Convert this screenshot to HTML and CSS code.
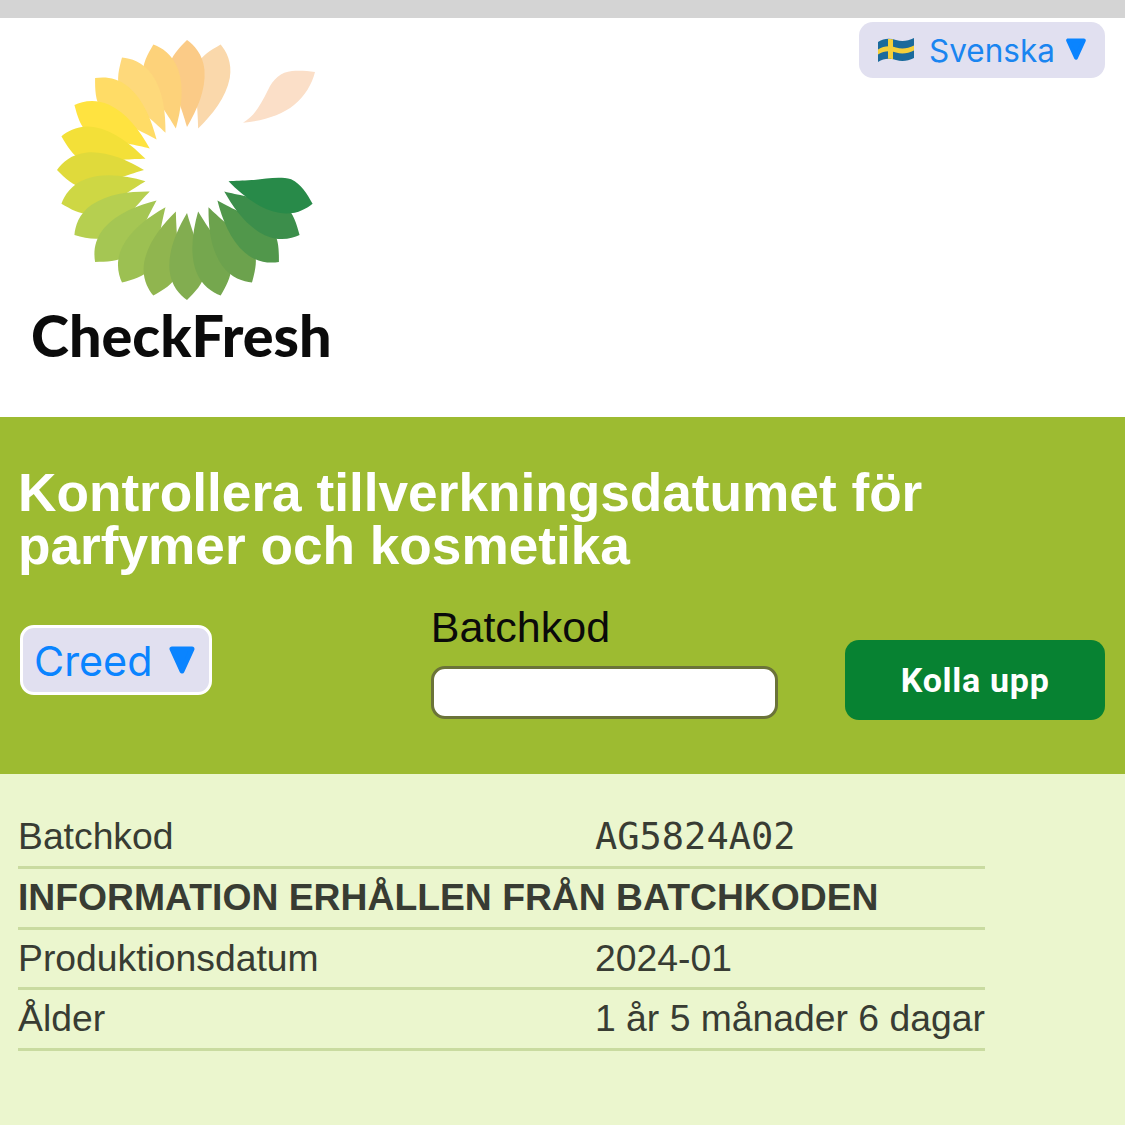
FILE: index.html
```html
<!DOCTYPE html>
<html>
<head>
    <meta charset="utf-8">
    <title>CheckFresh</title>
    <link rel="stylesheet" href="styles.css">
</head>
<body>
    <div class="topbar"></div>

    <!-- Logo och språk -->
    <header class="header">
        <div class="logo">
            <svg class="logo-mark" width="300" height="280" viewBox="0 0 300 280">
                <defs>
                    <path id="petal" d="M0,-43 C-2,-50 -4,-56 -7,-65 C-11,-77 -18,-90 -18,-103 C-16,-114 -8,-122 0,-130 C7,-125 16,-116 17.5,-100 C19,-80 10,-60 0,-43 Z"/>
                </defs>
                <g transform="translate(157 150)">
                    <use href="#petal" transform="rotate(15)" fill="#fad8ab"/>
                    <use href="#petal" transform="rotate(0)" fill="#fbcb87"/>
                    <use href="#petal" transform="rotate(-15)" fill="#fdd27a"/>
                    <use href="#petal" transform="rotate(-30)" fill="#fed97b"/>
                    <use href="#petal" transform="rotate(-45)" fill="#ffdc66"/>
                    <use href="#petal" transform="rotate(-60)" fill="#ffe340"/>
                    <use href="#petal" transform="rotate(-75)" fill="#f3e038"/>
                    <use href="#petal" transform="rotate(-90)" fill="#e0da3b"/>
                    <use href="#petal" transform="rotate(-105)" fill="#ced744"/>
                    <use href="#petal" transform="rotate(-120)" fill="#b6cf50"/>
                    <use href="#petal" transform="rotate(-135)" fill="#a5c653"/>
                    <use href="#petal" transform="rotate(-150)" fill="#9cc052"/>
                    <use href="#petal" transform="rotate(-165)" fill="#90b54f"/>
                    <use href="#petal" transform="rotate(180)" fill="#82ad50"/>
                    <use href="#petal" transform="rotate(165)" fill="#75a74e"/>
                    <use href="#petal" transform="rotate(150)" fill="#6ca24d"/>
                    <use href="#petal" transform="rotate(135)" fill="#51974b"/>
                    <use href="#petal" transform="rotate(120)" fill="#3c8e4b"/>
                    <use href="#petal" transform="rotate(105)" fill="#288a49"/>
                </g>
                <path d="M213,102.7 C224,97 231,84 238,70 C243,59 251,52 262,51 C270,50.5 278,51 285,52 C282,64 275,76 264,85 C252,95 233,101 213,102.7 Z" fill="#fbdfc8"/>
            </svg>
            <div class="logo-text">CheckFresh</div>
        </div>
        <button class="lang-button">
            <svg class="flag" width="36" height="26" viewBox="0 0 36 26">
                <path d="M0,5 C6,1 12,1 18,3 C24,5 30,4 36,1 V21 C30,24 24,25 18,23 C12,21 6,21 0,25 Z" fill="#1a6a9c"/>
                <path d="M10,2 C12,2 13,2 15,2.3 V22.3 C13,22 12,22 10,21.8 Z" fill="#f4cf3a"/>
                <path d="M0,12.5 C6,8.5 12,8.5 18,10.5 C24,12.5 30,11.5 36,8.5 V13.5 C30,16.5 24,17.5 18,15.5 C12,13.5 6,13.5 0,17.5 Z" fill="#f4cf3a"/>
            </svg>
            <span class="lang-name">Svenska</span>
            <svg class="caret caret-small" width="22" height="22" viewBox="0 0 26 28">
                <path d="M3,3 H23 L13,25 Z" fill="#0a84ff" stroke="#0a84ff" stroke-width="5" stroke-linejoin="round"/>
            </svg>
        </button>
    </header>

    <!-- Sökformulär -->
    <section class="search">
        <h1>Kontrollera tillverkningsdatumet för parfymer och kosmetika</h1>
        <div class="search-row">
            <button class="brand-button">
                <span>Creed</span>
                <svg class="caret" width="26" height="28" viewBox="0 0 26 28">
                    <path d="M3,3 H23 L13,25 Z" fill="#0a84ff" stroke="#0a84ff" stroke-width="5" stroke-linejoin="round"/>
                </svg>
            </button>
            <div class="batch-field">
                <label for="batch">Batchkod</label>
                <input id="batch" type="text">
            </div>
            <button class="lookup-button">Kolla upp</button>
        </div>
    </section>

    <!-- Resultat -->
    <section class="result">
        <table>
            <tr>
                <td class="col-label">Batchkod</td>
                <td class="mono">AG5824A02</td>
            </tr>
            <tr>
                <th colspan="2">INFORMATION ERHÅLLEN FRÅN BATCHKODEN</th>
            </tr>
            <tr>
                <td class="col-label">Produktionsdatum</td>
                <td>2024-01</td>
            </tr>
            <tr>
                <td class="col-label">Ålder</td>
                <td>1 år 5 månader 6 dagar</td>
            </tr>
        </table>
    </section>
</body>
</html>
```

FILE: styles.css
```css
* {
    box-sizing: border-box;
}
html, body {
    height: 100%;
}
body {
    margin: 0;
    display: flex;
    flex-direction: column;
    overflow: hidden;
    font-family: "Liberation Sans", Arial, sans-serif;
    background-color: #ebf6ce;
}
button {
    border: none;
    cursor: pointer;
}
.topbar {
    height: 18px;
    background-color: #d4d4d4;
}
.header {
    height: 399px;
    padding: 2px 20px 0 30px;
    display: flex;
    justify-content: space-between;
    align-items: flex-start;
    background-color: #fff;
}
.logo-mark {
    display: block;
}
.logo-text {
    margin-top: 4px;
    margin-left: 1px;
    font-family: Lato, "Noto Sans", sans-serif;
    font-weight: 900;
    font-size: 57.5px;
    line-height: 62px;
    color: #0b0b0b;
}
.lang-button {
    width: 246px;
    height: 56px;
    margin-top: 2px;
    padding: 0 18px 0 19px;
    display: flex;
    align-items: center;
    background-color: #e1e0f0;
    border-radius: 14px;
    color: #1a85f0;
}
.lang-name {
    margin-left: 15px;
    font-family: Inter, "Noto Sans", sans-serif;
    font-size: 31.5px;
}
.flag {
    flex: none;
}
.caret {
    flex: none;
    display: block;
}
.caret-small {
    margin-left: 10px;
    margin-top: -3px;
}
.search {
    height: 357px;
    padding: 50px 20px 0 18px;
    background-color: #9dbb31;
}
.search h1 {
    margin: 0;
    font-size: 53.2px;
    line-height: 52.5px;
    font-weight: bold;
    color: #fff;
}
.search-row {
    margin-top: 30px;
    display: flex;
    align-items: flex-start;
}
.brand-button {
    width: 192px;
    height: 70px;
    margin-top: 23px;
    margin-left: 2px;
    padding: 1px 14px 0 11px;
    display: flex;
    align-items: center;
    justify-content: space-between;
    background-color: #e1e0f0;
    border: 3px solid #fff;
    border-radius: 14px;
    color: #0a84ff;
    font-family: Inter, "Noto Sans", sans-serif;
    font-size: 41.3px;
}
.brand-button .caret {
    margin-top: -2px;
}
.batch-field {
    width: 348px;
    margin-left: 219px;
}
.batch-field label {
    display: block;
    font-size: 43px;
    line-height: 50px;
    color: #0a0a0a;
}
.batch-field input {
    display: block;
    width: 100%;
    height: 53px;
    margin-top: 14px;
    background-color: #fff;
    border: 3px solid #6b7339;
    border-radius: 14px;
}
.lookup-button {
    width: 260px;
    height: 80px;
    margin-top: 38px;
    margin-left: 67px;
    background-color: #078232;
    border-radius: 14px;
    color: #fff;
    font-family: Roboto, "Liberation Sans", sans-serif;
    font-weight: bold;
    font-size: 34px;
    letter-spacing: 0.7px;
}
.result {
    flex: 1;
    padding: 33px 0 0 18px;
}
.result table {
    width: 967px;
    border-collapse: collapse;
    font-size: 37.3px;
    color: #383c33;
}
.result td, .result th {
    height: 60.5px;
    padding: 0;
    text-align: left;
    white-space: nowrap;
    border-bottom: 3px solid #c9dba0;
}
.col-label {
    width: 577px;
}
.mono {
    font-family: "DejaVu Sans Mono", "Liberation Mono", monospace;
    font-size: 37px;
}
```
